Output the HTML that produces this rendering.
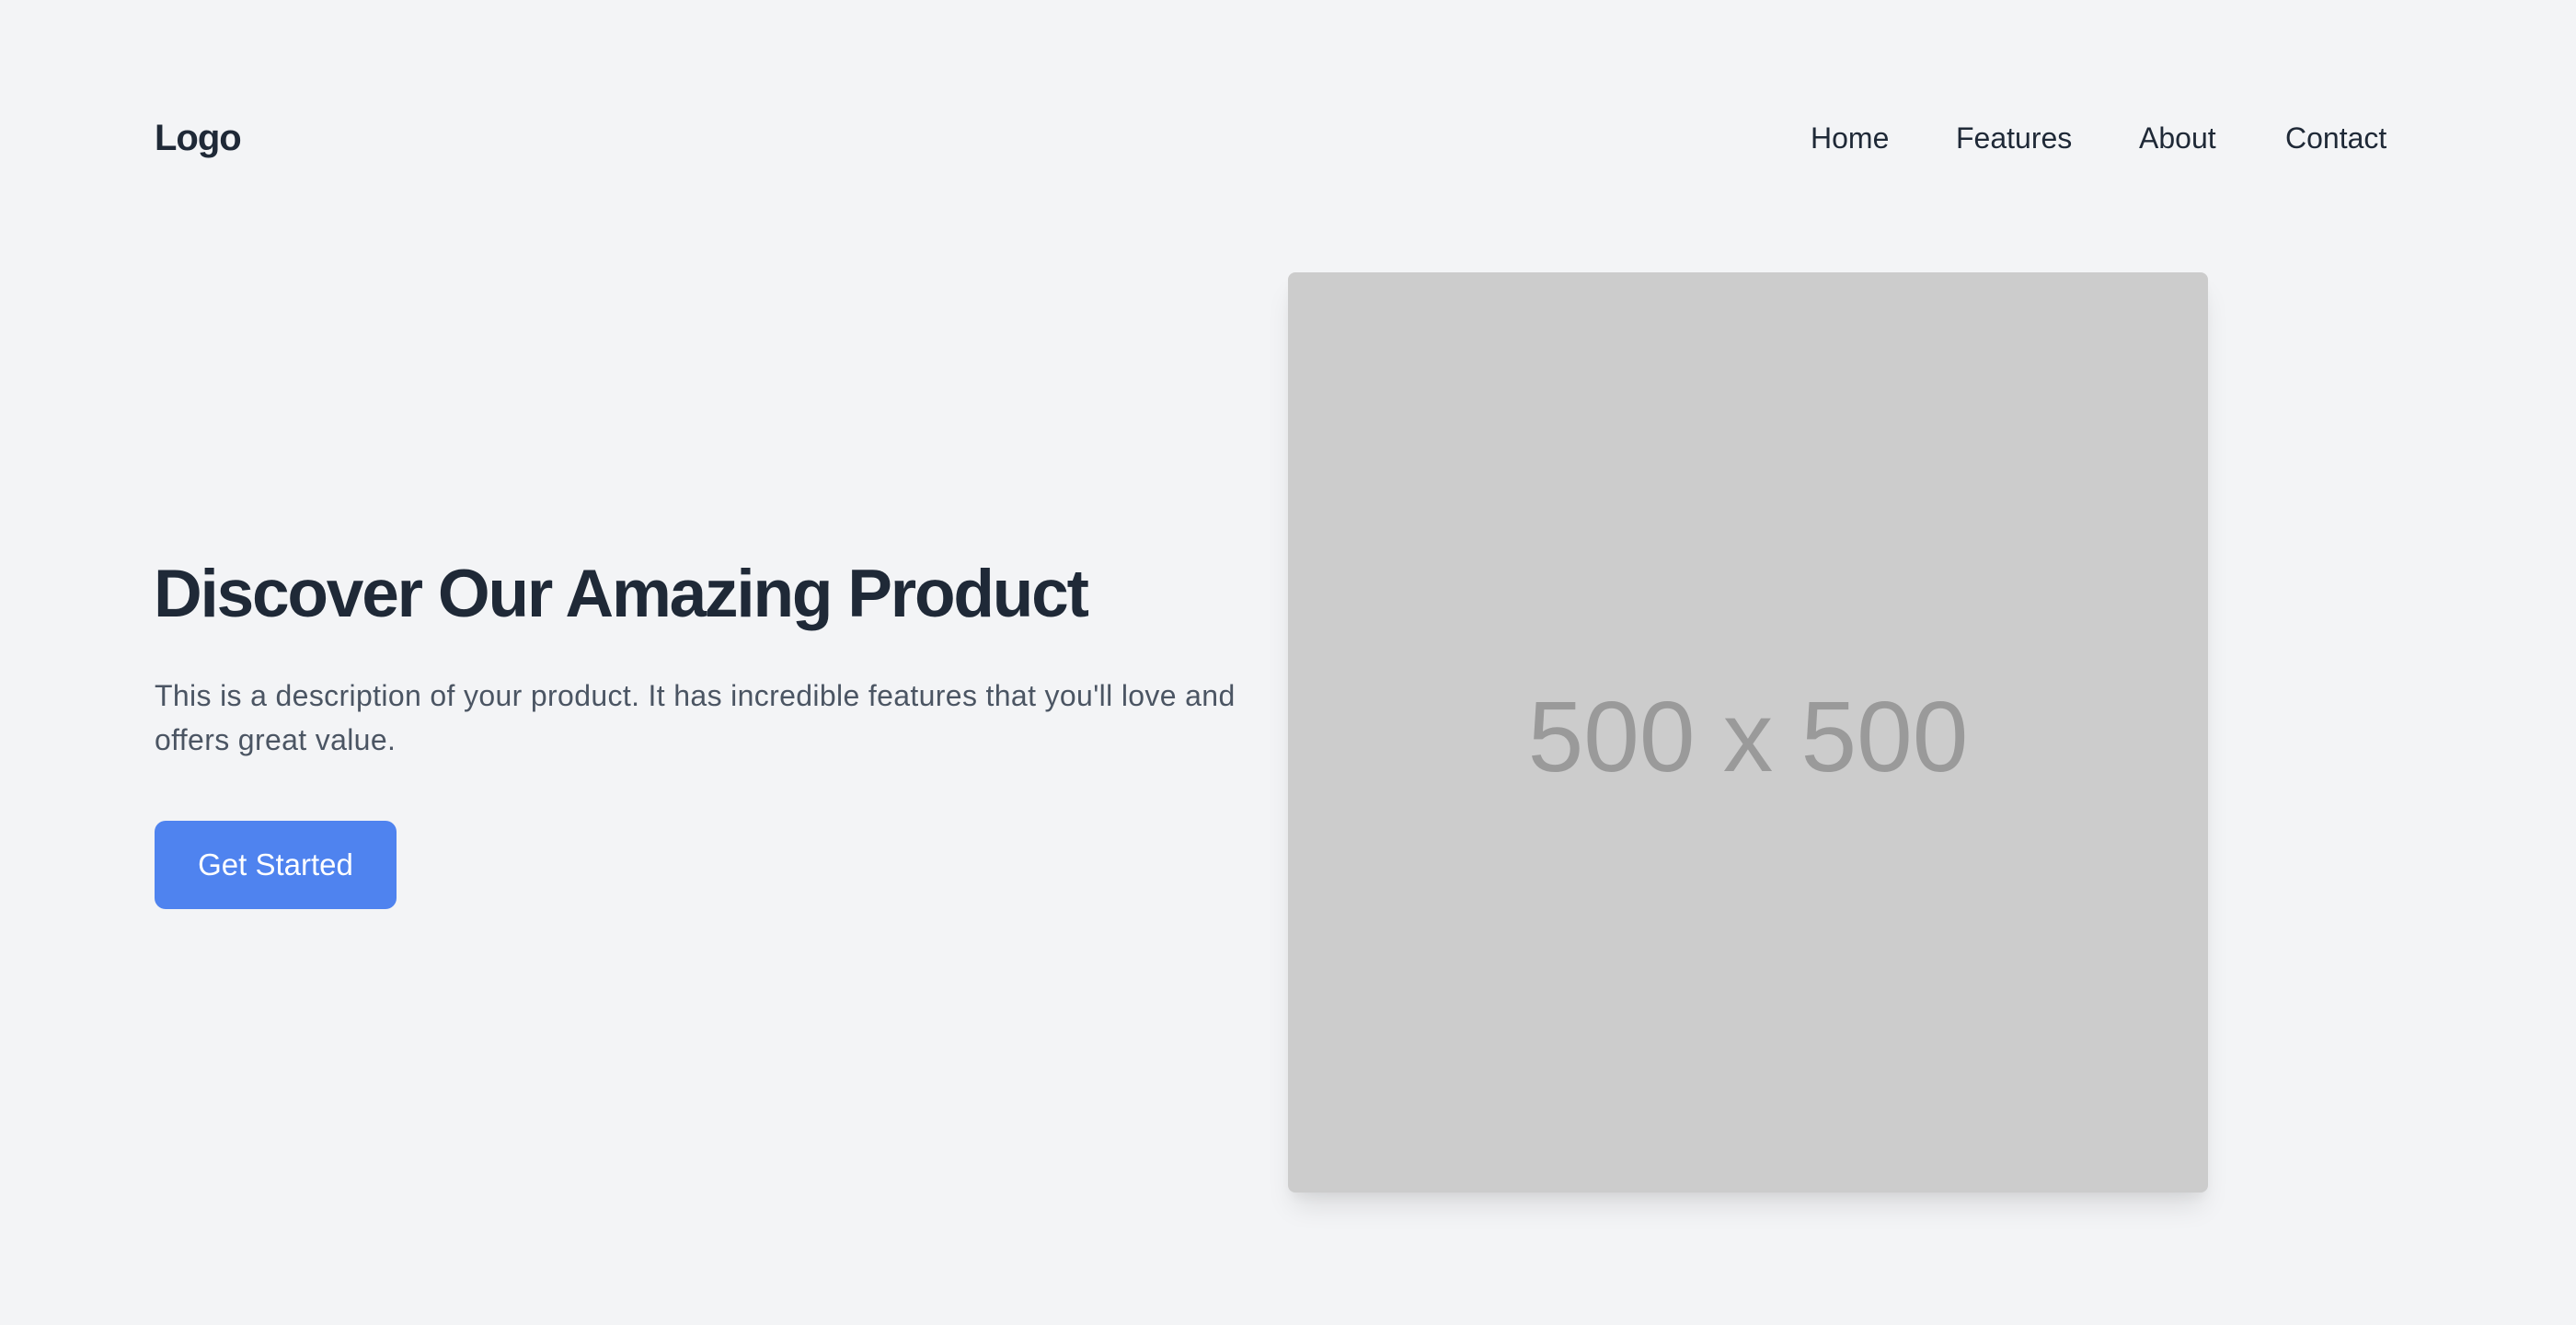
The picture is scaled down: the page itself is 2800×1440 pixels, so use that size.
<!DOCTYPE html>
<html><head><meta charset="utf-8">
<style>
html,body{margin:0;padding:0}
body{width:2800px;height:1440px;background:#f3f4f6;font-family:"Liberation Sans",Arial,sans-serif;position:relative;overflow:hidden;color:#1f2937}
.logo{position:absolute;left:168px;top:126px;font-size:40px;font-weight:bold;line-height:48px;letter-spacing:-1px}
.nav a{position:absolute;top:126px;font-size:32px;line-height:48px;color:#1f2937;text-decoration:none}
h1{position:absolute;left:167px;top:598px;margin:0;font-size:73px;line-height:96px;font-weight:bold;letter-spacing:-2.2px;white-space:nowrap}
p{position:absolute;left:168px;top:732px;margin:0;font-size:32px;line-height:48px;color:#4b5563;white-space:nowrap;letter-spacing:0.35px}
.btn{position:absolute;left:168px;top:892px;width:263px;height:96px;border-radius:12px;background:#4f83ef;color:#fff;font-size:33px;line-height:96px;text-align:center}
.img{position:absolute;left:1400px;top:296px;width:1000px;height:1000px;background:#cccccc;border-radius:8px;box-shadow:0 20px 30px -6px rgba(0,0,0,0.1),0 8px 12px -4px rgba(0,0,0,0.05)}
.img span{position:absolute;left:0;right:0;top:0;bottom:0;display:flex;align-items:center;justify-content:center;font-size:109px;color:#9a9a9a;padding-top:10px}
</style></head><body>
<div class="logo">Logo</div>
<div class="nav">
<a style="left:1968px">Home</a>
<a style="left:2126px">Features</a>
<a style="left:2325px">About</a>
<a style="left:2484px">Contact</a>
</div>
<h1>Discover Our Amazing Product</h1>
<p>This is a description of your product. It has incredible features that you'll love and<br>offers great value.</p>
<div class="btn">Get Started</div>
<div class="img"><span>500 x 500</span></div>
</body></html>
